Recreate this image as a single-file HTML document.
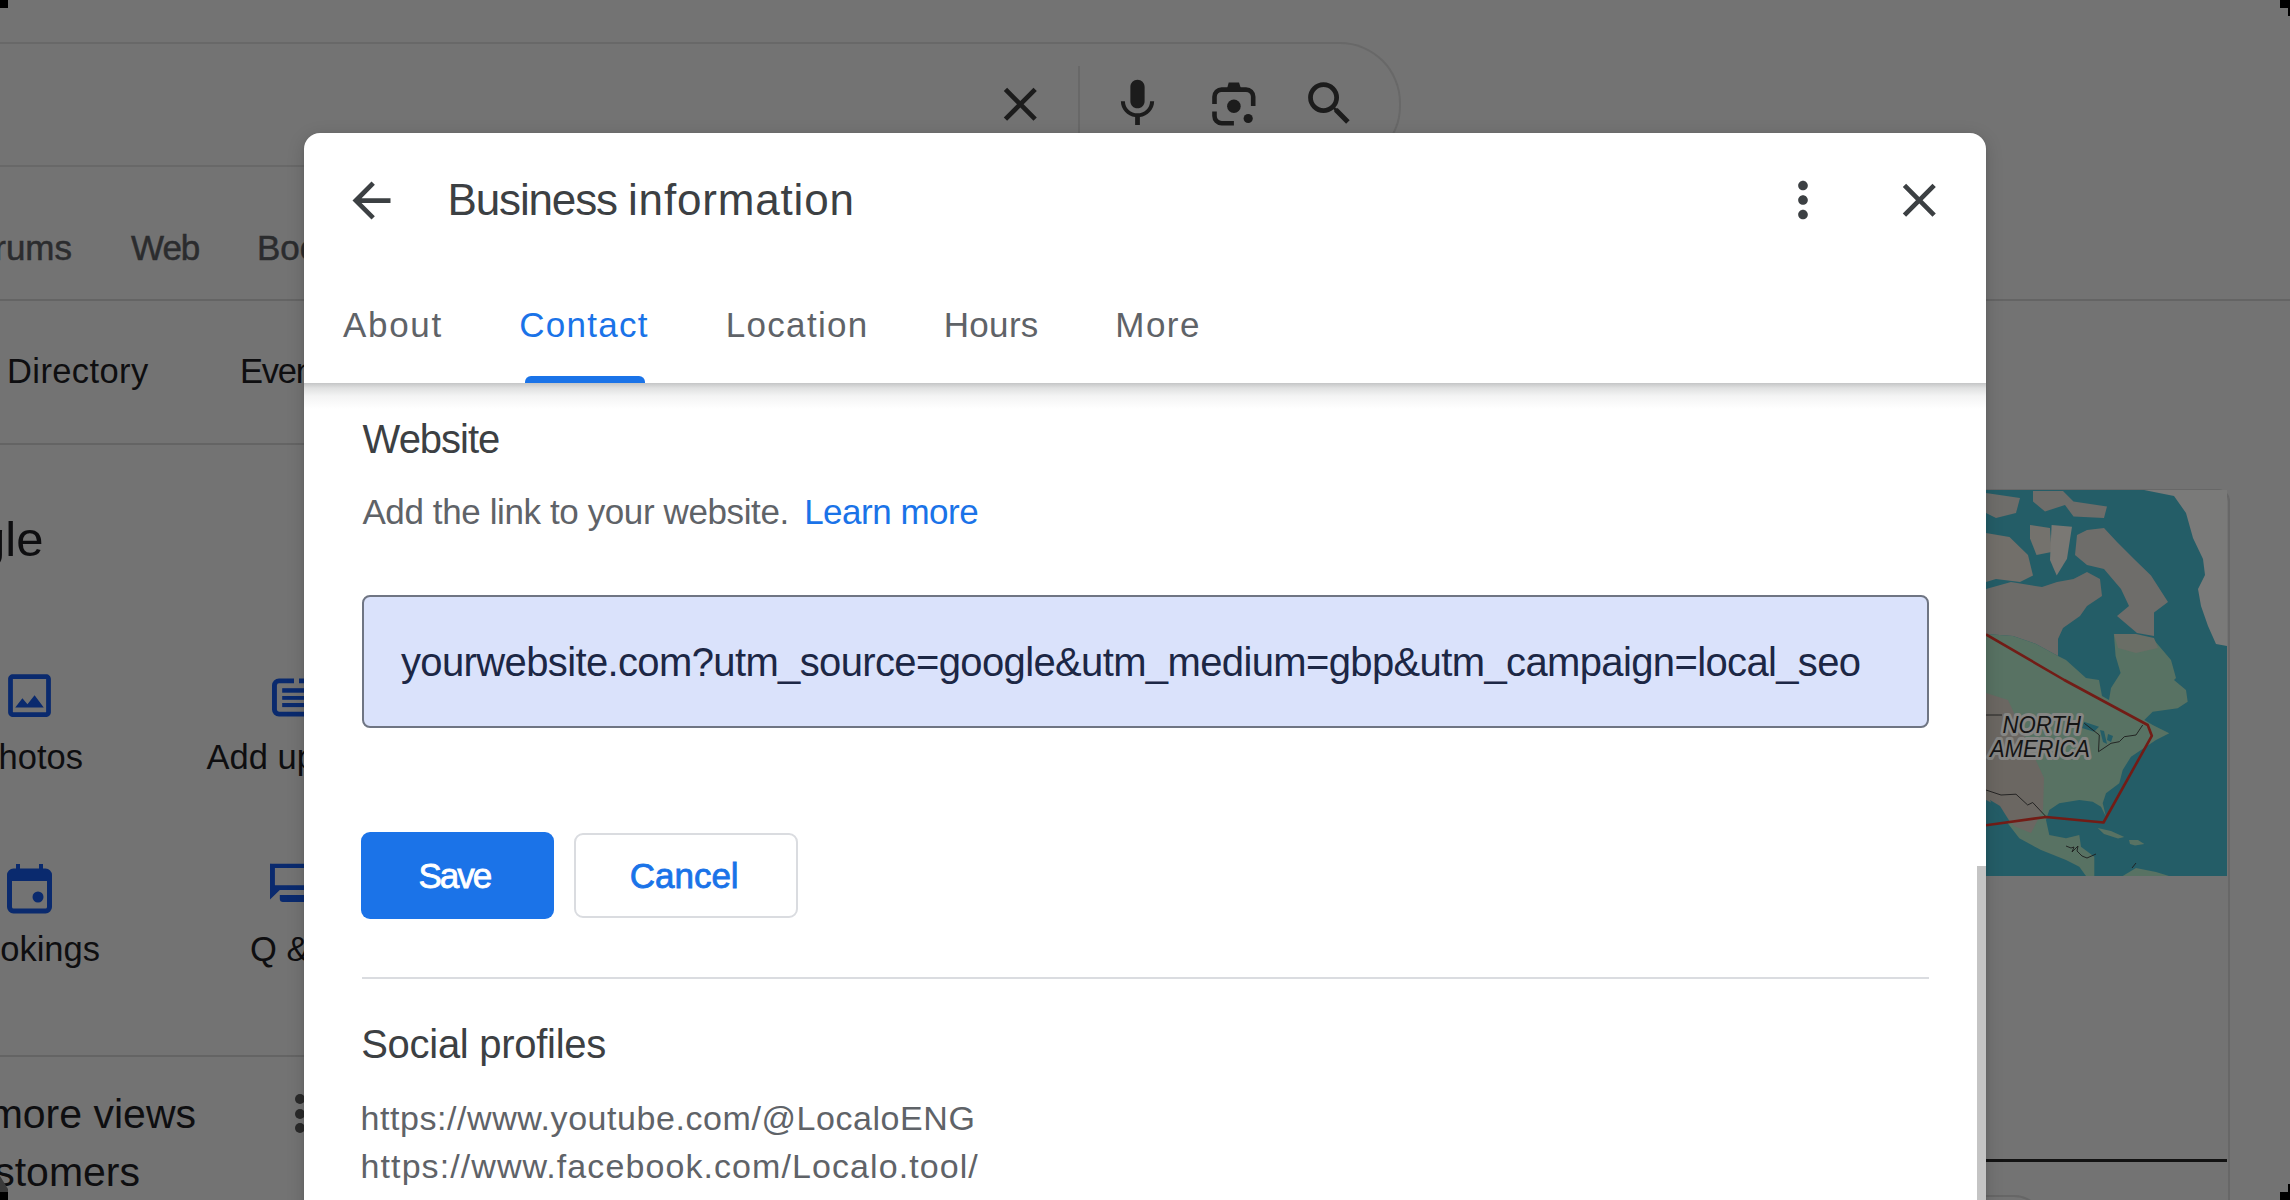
<!DOCTYPE html>
<html><head><meta charset="utf-8">
<style>
html,body{margin:0;padding:0;}
body{width:2290px;height:1200px;overflow:hidden;position:relative;background:#737373;font-family:"Liberation Sans",sans-serif;}
.a{position:absolute;white-space:pre;line-height:1;}
.ln{position:absolute;height:2px;background:#646464;}
svg{position:absolute;overflow:visible;}
#dlg{position:absolute;left:304px;top:133px;width:1682px;height:1200px;background:#fff;border-radius:16px 16px 0 0;box-shadow:0 4px 18px rgba(0,0,0,.16),0 1px 3px rgba(0,0,0,.10);overflow:hidden;}
#dlg .a{color:#3c4043;}
#dlg .tab{font-size:35px;top:173.8px;color:#5f6368;}
.blk{position:absolute;background:#000;}
</style></head><body>

<!-- ===== background page (already under scrim colours) ===== -->
<!-- search box -->
<div style="position:absolute;left:-200px;top:42px;width:1599px;height:121px;border:2px solid #686868;border-left:none;border-radius:0 61px 61px 0;box-sizing:content-box;"></div>
<div style="position:absolute;left:1078px;top:66px;width:2px;height:80px;background:#686868;"></div>
<!-- search icons -->
<svg style="left:991.7px;top:75.7px" width="56.6" height="56.6" viewBox="0 0 24 24"><path fill="#1c1c1c" d="M19 6.41L17.59 5 12 10.59 6.41 5 5 6.41 10.59 12 5 17.59 6.41 19 12 13.41 17.59 19 19 17.59 13.41 12z"/></svg>
<svg style="left:1108.9px;top:75.2px" width="57" height="57" viewBox="0 0 24 24"><path fill="#1c1c1c" d="M12 14c1.66 0 2.99-1.34 2.99-3L15 5c0-1.66-1.34-3-3-3S9 3.34 9 5v6c0 1.66 1.34 3 3 3zm5.3-3c0 3-2.54 5.1-5.3 5.1S6.7 14 6.7 11H5c0 3.410 2.72 6.23 6 6.72V21h2v-3.28c3.28-.48 6-3.3 6-6.72h-1.7z"/></svg>
<svg style="left:1212px;top:82px" width="44" height="44" viewBox="0 0 44 44">
 <path fill="none" stroke="#1c1c1c" stroke-width="4.6" d="M2.5 21.9 V14.8 A7.2 7.2 0 0 1 9.7 7.6 H34 A7.2 7.2 0 0 1 41.2 14.8 V24 M2.5 29.4 V34 A7.2 7.2 0 0 0 9.7 41.2 H21.9"/>
 <path fill="#1c1c1c" d="M15.2 6 L16.7 0.5 H27 L28.8 6 Z"/>
 <circle cx="21.9" cy="24.3" r="6.8" fill="#1c1c1c"/>
 <circle cx="36.2" cy="36.5" r="4.6" fill="#1c1c1c"/>
</svg>
<svg style="left:1300.9px;top:75px" width="57" height="57" viewBox="0 0 24 24"><path fill="#1c1c1c" d="M15.5 14h-.79l-.28-.27A6.471 6.471 0 0 0 16 9.5 6.5 6.5 0 1 0 9.5 16c1.61 0 3.090-.59 4.23-1.57l.27.28v.79l5 4.99L20.49 19l-4.99-5zm-6 0C7.01 14 5 11.99 5 9.5S7.01 5 9.5 5 14 7.01 14 9.5 11.99 14 9.5 14z"/></svg>

<!-- nav rows -->
<span class="a" id="t_rums" style="font-size:35px;color:#2b2c2e;right:2218px;top:229.9px;-webkit-text-stroke:0.5px #2b2c2e;">Forums</span>
<span class="a" id="t_web" style="font-size:35px;color:#2b2c2e;left:131px;top:229.9px;letter-spacing:-1px;-webkit-text-stroke:0.5px #2b2c2e;">Web</span>
<span class="a" id="t_books" style="font-size:35px;color:#2b2c2e;left:257px;top:229.9px;-webkit-text-stroke:0.5px #2b2c2e;">Books</span>
<div class="ln" style="left:0;top:299px;width:2290px;"></div>
<span class="a" style="font-size:34.5px;color:#0e0e10;left:7px;top:353.8px;letter-spacing:0.4px;">Directory</span>
<span class="a" style="font-size:34.5px;color:#0e0e10;left:240px;top:353.8px;letter-spacing:-1.2px;">Events</span>
<div class="ln" style="left:0;top:443px;width:320px;"></div>
<span class="a" style="font-size:49px;color:#0e0e10;right:2246.5px;top:514.5px;">Google</span>

<!-- business actions -->
<svg style="left:0.9px;top:666.9px" width="57" height="57" viewBox="0 0 24 24"><path fill="#0a2a6e" d="M19 5v14H5V5h14m0-2H5c-1.1 0-2 .9-2 2v14c0 1.1.9 2 2 2h14c1.1 0 2-.9 2-2V5c0-1.1-.9-2-2-2zm-4.86 8.86l-3 3.87L9 13.14 6 17h12l-3.86-5.14z"/></svg>
<svg style="left:272px;top:678px" width="40" height="40" viewBox="0 0 40 40"><path fill="none" stroke="#0a2a6e" stroke-width="4.9" d="M22 2.85 H7 A4.6 4.6 0 0 0 2.45 7.4 V31.5 A4.6 4.6 0 0 0 7 36.1 H40 M27 2.85 H40"/><rect x="10.2" y="10.2" width="30" height="4.5" fill="#0a2a6e"/><rect x="10.2" y="18" width="30" height="3.8" fill="#0a2a6e"/><rect x="10.2" y="25" width="30" height="4.1" fill="#0a2a6e"/></svg>
<span class="a" style="font-size:34.5px;color:#0e0e10;right:2207px;top:740px;">photos</span>
<span class="a" style="font-size:34.5px;color:#0e0e10;left:206.5px;top:740px;">Add update</span>
<svg style="left:7px;top:863px" width="45" height="50" viewBox="0 0 45 50"><path fill="none" stroke="#0a2a6e" stroke-width="5" d="M2.5 12 A4 4 0 0 1 6.5 8 H38.5 A4 4 0 0 1 42.5 12 V44 A4 4 0 0 1 38.5 48 H6.5 A4 4 0 0 1 2.5 44 Z"/><rect x="2" y="8" width="41" height="10" fill="#0a2a6e"/><rect x="9" y="1" width="4" height="9" fill="#0a2a6e"/><rect x="32" y="1" width="4" height="9" fill="#0a2a6e"/><circle cx="31" cy="34" r="5.5" fill="#0a2a6e"/></svg>
<svg style="left:270px;top:863px" width="40" height="40" viewBox="0 0 40 40"><path fill="#0a2a6e" d="M0 1.5 A1 1 0 0 1 1.5 0.8 H40 V27.1 H9.8 L0 36.5 Z M4.9 5.1 V22.2 H40 V5.1 Z" fill-rule="evenodd"/><path fill="#0a2a6e" d="M9.8 32 H40 V39 H13 A3.2 3.2 0 0 1 9.8 35.8 Z"/></svg>
<span class="a" style="font-size:34.5px;color:#0e0e10;right:2190px;top:932.3px;">Bookings</span>
<span class="a" style="font-size:34.5px;color:#0e0e10;left:250px;top:932.3px;">Q &amp; A</span>
<div class="ln" style="left:0;top:1055px;width:320px;"></div>
<span class="a" style="font-size:41px;color:#0e0e10;right:2094px;top:1093.5px;">Get more views</span>
<span class="a" style="font-size:41px;color:#0e0e10;right:2150px;top:1151.5px;">customers</span>
<div style="position:absolute;left:295px;top:1094px;width:10px;height:10px;border-radius:50%;background:#2a2a2a"></div>
<div style="position:absolute;left:295px;top:1108.5px;width:10px;height:10px;border-radius:50%;background:#2a2a2a"></div>
<div style="position:absolute;left:295px;top:1123px;width:10px;height:10px;border-radius:50%;background:#2a2a2a"></div>

<!-- right column: map card -->
<div style="position:absolute;left:1900px;top:489px;width:326px;height:1000px;border:2px solid #676767;border-radius:12px;"></div>
<svg style="left:1986px;top:488px;overflow:hidden" width="241" height="388" viewBox="0 0 241 388">
 <rect x="0" y="2" width="241" height="386" fill="#245d67"/>
 <!-- greenland -->
 <polygon fill="#7a7a79" points="158,2 188,8 200,25 207,50 217,71 219,87 212,101 215,118 222,138 230,156 241,158 241,2"/>
 <!-- arctic islands -->
 <polygon fill="#6e6d6a" points="47,3 77,3 87.5,13.5 121,18.5 118,30 87.5,28.6 79,17 59,23.5 47,13.5"/>
 <polygon fill="#6e6d6a" points="0,5 34,10 30,25 10,30 0,25"/>
 <polygon fill="#726f6a" points="0,45 23.5,49 42,67 47,87.5 34,94 10,91 0,94"/>
 <polygon fill="#74726d" points="44,37 64,40 65.6,64 50.5,67 44,50.5"/>
 <polygon fill="#7a7874" points="65.6,37 86,38.7 81,70.7 70.7,87.5 64,72"/>
 <polygon fill="#6e6d6a" points="101,42 118,40 131,54 148,71 165,87.5 182,114 168,124.5 168,148 151,145 131,128 143,118 135,101 118,81 101,77 89,67 91,47"/>
 <polygon fill="#6c6b68" points="0,101 25,94 56,99 71,94 87.5,91 101,84 114,91 116,108 101,118 94,128 77,140 72,151 72,168 50,156 27,148 0,146"/>
 <!-- main land (green) -->
 <polygon fill="#587263" points="0,146 27,148 50,156 72,168 80,172 100,190 113,192 116,208 123,212 125,200 134.6,185 129.6,168 127.9,146 150,150 168,152 185,172 190,190 188,192 200,202 201.7,213.7 191.7,220.3 166.7,223.7 158.3,232 166.7,237 183.3,245.3 170,252 155,262 145,268.7 136.7,282 133.3,295.3 120,305.3 116.7,315.3 120,328.7 115,318.7 106.7,313.7 93.3,312 73.3,315.3 63.3,322 60,332 63.3,347 80,350.3 93.3,347 95,358.7 108.3,368.7 108.3,388 100,388 93.3,378.7 80,372 55,362 33.3,350.3 21.7,335.3 13.3,322 3.3,312 0,308.7"/>
 <polygon fill="#6a6e66" points="128,146 150,146 168,150 172,160 150,165 132,160"/>
 <polygon fill="#6b6762" points="0,205 22,212 42,255 58,290 57,322 45,345 28,338 12,318 0,312"/>
 <polygon fill="#245d67" points="98,233.7 113,238.7 108,243.7 96,240"/>
 <polygon fill="#245d67" points="114,242 118,243 121,256 117,254"/>
 <polygon fill="#245d67" points="122,246 127,248 125,254 121,252"/>
 <polygon fill="#245d67" points="4,312 14,318 24,334 20,336 8,322"/>
 <!-- caribbean / south america -->
 <polygon fill="#587263" points="111.7,340 125,343 138.3,349 132,350.5 118,346"/>
 <polygon fill="#587263" points="143,352 152,352 158.3,356 149,357.5 144,356"/>
 <polygon fill="#587263" points="136.7,388 150,380 170,384 183,388"/>
 <!-- borders -->
 <polyline fill="none" stroke="#1d1d1d" stroke-width="0.9" points="98.3,235.3 113.3,247 112.5,263.7 125,255.3 133.3,253.7 138.3,248.7 150,247 156.7,237"/>
 <polyline fill="none" stroke="#1d1d1d" stroke-width="0.9" points="0,302 15,307 30,306.2 41.7,317 46.7,314.5 60,328.7"/>
 <polyline fill="none" stroke="#1d1d1d" stroke-width="0.9" points="0,227 16,227"/>
 <polyline fill="none" stroke="#1d1d1d" stroke-width="0.9" points="80,358 85,360 88,359 86,364 92,358 91,363 96,368 101,370 110,366"/>
 <polyline fill="none" stroke="#1d1d1d" stroke-width="0.9" points="146,380 150,375"/>
 <!-- red outline -->
 <polyline fill="none" stroke="#721c16" stroke-width="2.6" stroke-linejoin="round" points="0,146.4 78.3,192 161.7,237 165.8,247.8 117.5,334.5 60,329 0,337.3"/>
 <!-- label -->
 <g font-family="Liberation Sans" font-style="italic" font-size="24.5" fill="#141414" stroke="#868684" stroke-width="6" paint-order="stroke" stroke-linejoin="round">
  <text x="16.5" y="245.3" textLength="78.5" lengthAdjust="spacingAndGlyphs">NORTH</text>
  <text x="4" y="268.7" textLength="100" lengthAdjust="spacingAndGlyphs">AMERICA</text>
 </g>
</svg>
<div style="position:absolute;left:1986px;top:1159px;width:241px;height:3px;background:#121212;"></div>
<svg style="left:1986px;top:1190px" width="60" height="10" viewBox="0 0 60 10"><path d="M0 6 H28 Q38 6 46 12" fill="none" stroke="#666" stroke-width="2"/></svg>

<!-- ===== dialog ===== -->
<div id="dlg">
 <svg style="left:38.5px;top:38.7px" width="57" height="57" viewBox="0 0 24 24"><path fill="#3c4043" d="M20 11H7.83l5.59-5.59L12 4l-8 8 8 8 1.41-1.41L7.83 13H20v-2z"/></svg>
 <span class="a" id="d_title" style="font-size:44px;left:143.5px;top:44.75px;letter-spacing:-1.14px;">Business</span><span class="a" id="d_title2" style="font-size:44px;left:324px;top:44.75px;letter-spacing:0.83px;">information</span>
 <svg style="left:1470.4px;top:38.1px" width="58" height="58" viewBox="0 0 24 24"><path fill="#3c4043" d="M12 8c1.1 0 2-.9 2-2s-.9-2-2-2-2 .9-2 2 .9 2 2 2zm0 2c-1.1 0-2 .9-2 2s.9 2 2 2 2-.9 2-2-.9-2-2-2zm0 6c-1.1 0-2 .9-2 2s.9 2 2 2 2-.9 2-2-.9-2-2-2z"/></svg>
 <svg style="left:1586.7px;top:39px" width="56.6" height="56.6" viewBox="0 0 24 24"><path fill="#3c4043" d="M19 6.41L17.59 5 12 10.59 6.41 5 5 6.41 10.59 12 5 17.59 6.41 19 12 13.41 17.59 19 19 17.59 13.41 12z"/></svg>
 <span class="a tab" id="d_about" style="left:39px;letter-spacing:1.68px;">About</span>
 <span class="a tab" id="d_contact" style="left:215.3px;color:#1a73e8;letter-spacing:1.27px;">Contact</span>
 <span class="a tab" id="d_loc" style="left:421.7px;letter-spacing:1.33px;">Location</span>
 <span class="a tab" id="d_hours" style="left:639.7px;letter-spacing:0.33px;">Hours</span>
 <span class="a tab" id="d_more" style="left:811.3px;letter-spacing:1.47px;">More</span>
 <div style="position:absolute;left:220.9px;top:242.7px;width:120px;height:7.4px;background:#1a73e8;border-radius:6px 6px 0 0;"></div>
 <div style="position:absolute;left:0;top:250px;width:1682px;height:26px;background:linear-gradient(to bottom,rgba(60,64,67,.30) 0,rgba(60,64,67,.16) 5px,rgba(60,64,67,.06) 13px,rgba(60,64,67,0) 26px);"></div>

 <span class="a" id="d_website" style="font-size:40px;left:58.6px;top:285.8px;letter-spacing:-1px;">Website</span>
 <span class="a" id="d_desc" style="font-size:35px;left:58.4px;top:361px;color:#5f6368;letter-spacing:-0.39px;">Add the link to your website. <span id="d_learn" style="color:#1a73e8;letter-spacing:-0.5px;margin-left:6px">Learn more</span></span>
 <div style="position:absolute;left:57.5px;top:461.7px;width:1567px;height:133.7px;box-sizing:border-box;border:2px solid #6f7583;border-radius:8px;background:#dae2fb;"></div>
 <span class="a" id="d_input" style="font-size:40px;left:97px;top:509.2px;color:#1c2745;letter-spacing:-0.63px;">yourwebsite.com?utm_source=google&amp;utm_medium=gbp&amp;utm_campaign=local_seo</span>
 <div style="position:absolute;left:57.3px;top:699.3px;width:192.5px;height:86.6px;background:#1b73e8;border-radius:9px;"></div>
 <span class="a" id="d_save" style="font-size:35px;font-weight:400;left:114.5px;top:724.6px;color:#fff;letter-spacing:-2px;-webkit-text-stroke:0.8px #fff;">Save</span>
 <div style="position:absolute;left:269.7px;top:699.7px;width:224.8px;height:85.4px;box-sizing:border-box;border:2px solid #dadce0;border-radius:9px;"></div>
 <span class="a" id="d_cancel" style="font-size:35px;font-weight:400;left:325.7px;top:724.6px;color:#1a73e8;letter-spacing:0px;-webkit-text-stroke:0.8px #1a73e8;">Cancel</span>
 <div style="position:absolute;left:57.5px;top:844px;width:1567px;height:2px;background:#dadce0;"></div>
 <span class="a" id="d_social" style="font-size:40px;left:57.2px;top:891.3px;letter-spacing:-0.28px;">Social profiles</span>
 <span class="a" id="d_url1" style="font-size:34px;left:56.6px;top:968px;color:#5f6368;letter-spacing:0.56px;">https://www.youtube.com/@LocaloENG</span>
 <span class="a" id="d_url2" style="font-size:34px;left:56.6px;top:1016.2px;color:#5f6368;letter-spacing:1.08px;">https://www.facebook.com/Localo.tool/</span>
 <div style="position:absolute;left:1673px;top:733px;width:9px;height:600px;background:#c4c4c4;"></div>
</div>

<!-- corner artifacts -->
<div class="blk" style="left:0;top:0;width:8px;height:8px"></div>
<div class="blk" style="left:2280px;top:0;width:10px;height:8px"></div>
<div class="blk" style="left:2288px;top:8px;width:2px;height:8px"></div>
<svg style="left:0;top:1176px" width="8" height="16" viewBox="0 0 8 16"><polygon points="0,0 8,13 8,16 0,16" fill="#3a3a3a"/></svg>
<div class="blk" style="left:0;top:1192px;width:8px;height:8px"></div>
<div class="blk" style="left:2280px;top:1192px;width:10px;height:8px"></div>
<div class="blk" style="left:2288px;top:1184px;width:2px;height:8px"></div>
</body></html>
